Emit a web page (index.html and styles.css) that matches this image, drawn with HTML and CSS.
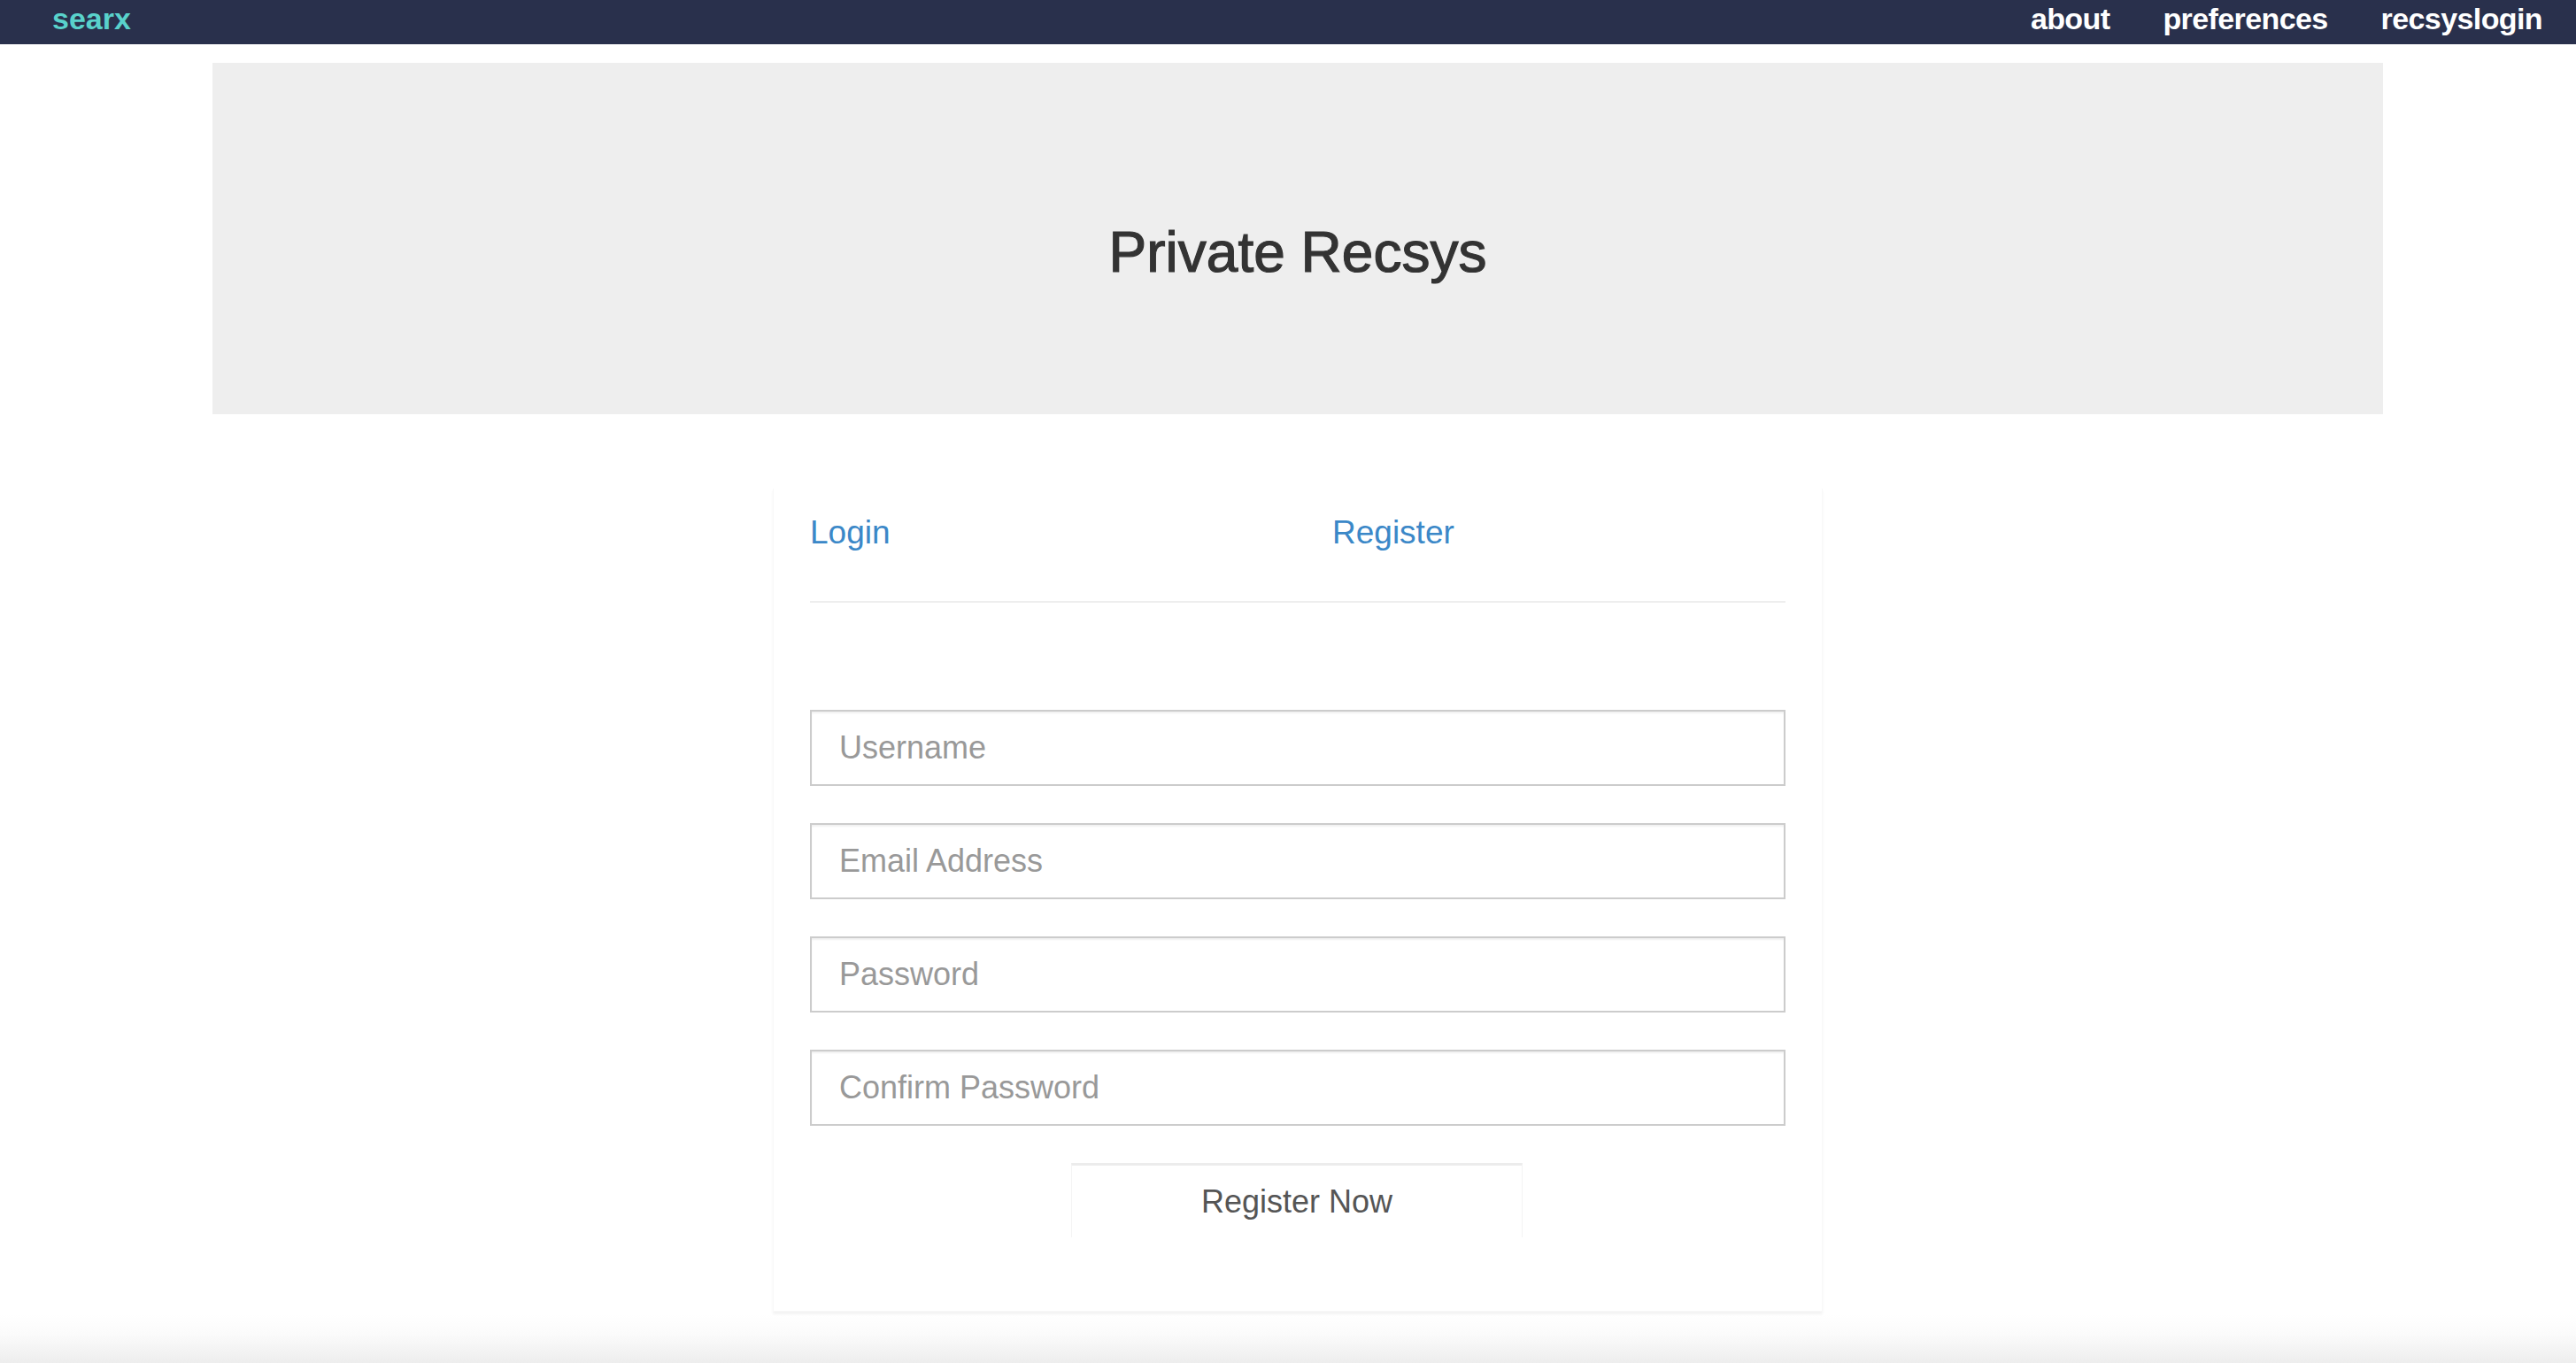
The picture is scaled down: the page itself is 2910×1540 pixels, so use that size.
FILE: index.html
```html
<!DOCTYPE html>
<html lang="en">
<head>
<meta charset="utf-8">
<title>Private Recsys</title>
<link rel="stylesheet" href="styles.css">
</head>
<body>
<nav class="navbar">
  <a class="brand" href="#">searx</a>
  <ul class="nav-links">
    <li><a href="#">about</a></li>
    <li><a href="#">preferences</a></li>
    <li><a href="#">recsyslogin</a></li>
  </ul>
</nav>
<main class="container">
  <section class="jumbotron">
    <h1>Private Recsys</h1>
  </section>
  <section class="panel">
    <div class="tabs">
      <a class="tab" href="#">Login</a>
      <a class="tab" href="#">Register</a>
    </div>
    <form class="form">
      <input class="field" type="text" placeholder="Username">
      <input class="field" type="email" placeholder="Email Address">
      <input class="field" type="password" placeholder="Password">
      <input class="field" type="password" placeholder="Confirm Password">
      <div class="actions">
        <button class="btn" type="button">Register Now</button>
      </div>
    </form>
  </section>
</main>
<div class="page-shade"></div>
</body>
</html>
```

FILE: styles.css
```css
* { box-sizing: border-box; }
html, body { margin: 0; padding: 0; }
body {
  font-family: "Liberation Sans", Arial, Helvetica, sans-serif;
  background: #ffffff;
  color: #333333;
  width: 2910px;
  height: 1540px;
  overflow: hidden;
}
a { text-decoration: none; }

.navbar {
  height: 50px;
  background: #29304c;
  display: flex;
  justify-content: space-between;
  align-items: flex-start;
}
.brand {
  font-size: 34px;
  font-weight: bold;
  line-height: 42px;
  color: #59d2cb;
  padding-left: 59px;
}
.nav-links {
  list-style: none;
  margin: 0;
  padding: 0 8px 0 0;
  display: flex;
}
.nav-links a {
  display: block;
  font-size: 34px;
  font-weight: bold;
  line-height: 42px;
  letter-spacing: -0.6px;
  color: #ffffff;
  padding: 0 30px;
}

.container {
  margin: 21px 218px 0 240px;
}
.jumbotron {
  background: #eeeeee;
  height: 397px;
  padding-top: 180px;
  text-align: center;
}
.jumbotron h1 {
  margin: 0;
  font-size: 64px;
  line-height: 69px;
  font-weight: 500;
  color: #333333;
  -webkit-text-stroke: 1.2px #333333;
}

.panel {
  width: 1186px;
  margin: 84px auto 0;
  padding: 28px 41px 83px;
  border: 1px solid #f8f8f8;
  border-top: none;
  box-shadow: 0 3px 3px rgba(0, 0, 0, 0.05);
  background: #ffffff;
}
.tabs {
  display: grid;
  grid-template-columns: 590px 1fr;
  padding-bottom: 55px;
  border-bottom: 2px solid #eeeeee;
}
.tab {
  font-size: 37px;
  line-height: 44px;
  color: #3b88c8;
}

.form {
  margin-top: 121px;
  display: flex;
  flex-direction: column;
}
.field {
  display: block;
  width: 100%;
  height: 86px;
  margin: 0 0 42px;
  padding: 0 31px;
  border: 2px solid #cccccc;
  border-radius: 0;
  box-shadow: inset 0 2px 2px rgba(0, 0, 0, 0.06);
  font-family: "Liberation Sans", Arial, Helvetica, sans-serif;
  font-size: 36px;
  color: #555555;
  background: #ffffff;
  outline: none;
}
.field::placeholder { color: #999999; }

.actions {
  display: flex;
  justify-content: center;
  padding-right: 2px;
}
.btn {
  width: 510px;
  height: 84px;
  padding: 0;
  background: #ffffff;
  border: 1px solid #f4f4f4;
  border-top: 3px solid #ececec;
  border-bottom: none;
  border-radius: 0;
  font-family: "Liberation Sans", Arial, Helvetica, sans-serif;
  font-size: 36px;
  color: #555555;
  cursor: pointer;
}

.page-shade {
  height: 56px;
  margin-top: 3px;
  background: linear-gradient(to bottom, rgba(238, 238, 238, 0) 0%, #fbfbfb 40%, #ededed 100%);
}
```
